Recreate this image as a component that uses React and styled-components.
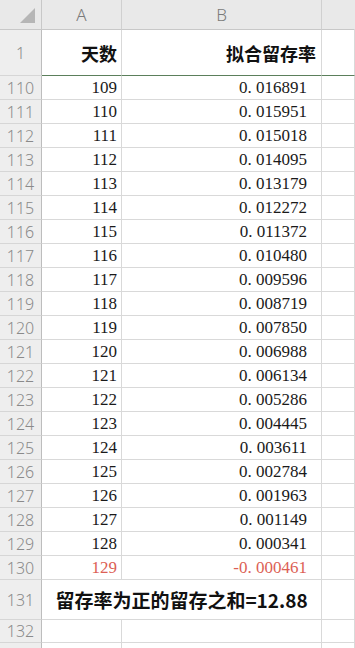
import React from 'react'
import styled, { createGlobalStyle } from 'styled-components'

const GlobalStyle = createGlobalStyle`
  html, body {
    margin: 0;
    padding: 0;
    background: #ffffff;
    overflow: hidden;
  }
`

const Sheet = styled.div`
  display: grid;
  grid-template-columns: 42px 80px 200px 1fr;
  width: 355px;
  height: 648px;
  overflow: hidden;
  background: #ffffff;
`

const Corner = styled.div`
  box-sizing: border-box;
  height: 30px;
  background: #e9e9e9;
  border-right: 1px solid #c8c8c8;
  border-bottom: 1px solid #c8c8c8;
  display: flex;
  align-items: flex-end;
  justify-content: flex-end;
  padding: 0 6px 6px 0;
`

const Triangle = styled.div`
  width: 0;
  height: 0;
  border-left: 15px solid transparent;
  border-bottom: 15px solid #b6b6b6;
`

const ColHead = styled.div`
  box-sizing: border-box;
  height: 30px;
  background: #e9e9e9;
  border-right: 1px solid ${(p) => (p.last ? 'transparent' : '#d0d0d0')};
  border-bottom: 1px solid #c8c8c8;
  display: flex;
  align-items: center;
  justify-content: center;
  font-family: 'Noto Sans', sans-serif;
  font-weight: 300;
  font-size: 17px;
  color: #7a7a7a;
`

const RowHead = styled.div`
  box-sizing: border-box;
  height: ${(p) => p.h}px;
  background: #eeeeee;
  border-right: 1px solid #bdbdbd;
  border-bottom: 1px solid #d6d6d6;
  display: flex;
  align-items: center;
  justify-content: center;
  font-family: 'Noto Sans', sans-serif;
  font-weight: 300;
  font-size: 16px;
  color: #8a8a8a;
`

const Cell = styled.div`
  box-sizing: border-box;
  height: ${(p) => p.h}px;
  border-right: 1px solid #d9d9d9;
  border-bottom: 1px solid ${(p) => (p.frozen ? '#5b7f5b' : '#d9d9d9')};
  display: flex;
  align-items: center;
  justify-content: flex-end;
  padding-right: ${(p) => p.pr || 4}px;
  font-family: 'Liberation Serif', 'DejaVu Serif', serif;
  font-size: 17px;
  color: ${(p) => (p.red ? '#dc5f55' : '#1a1a1a')};
`

const TitleCell = styled(Cell)`
  align-items: flex-end;
  padding-bottom: 9px;
  font-family: 'Noto Sans CJK SC', 'Noto Sans', sans-serif;
  font-weight: 700;
  font-size: 18px;
  color: #111111;
`

const SumCell = styled.div`
  grid-column: span 2;
  box-sizing: border-box;
  height: 40px;
  border-right: 1px solid #d9d9d9;
  border-bottom: 1px solid #d9d9d9;
  display: flex;
  align-items: center;
  justify-content: center;
  font-family: 'Noto Sans CJK SC', 'Noto Sans', sans-serif;
  font-weight: 700;
  font-size: 19px;
  color: #111111;
`

const Dot = styled.span`
  letter-spacing: 0.25em;
`

const rates = [
  '0.016891', '0.015951', '0.015018', '0.014095', '0.013179', '0.012272',
  '0.011372', '0.010480', '0.009596', '0.008719', '0.007850', '0.006988',
  '0.006134', '0.005286', '0.004445', '0.003611', '0.002784', '0.001963',
  '0.001149', '0.000341', '-0.000461',
]

const Rate = ({ value }) => {
  const [a, b] = value.split('.')
  return (
    <span>
      {a}
      <Dot>.</Dot>
      {b}
    </span>
  )
}

const App = () => {
  return (
    <>
      <GlobalStyle />
      <Sheet>
        <Corner>
          <Triangle />
        </Corner>
        <ColHead>A</ColHead>
        <ColHead>B</ColHead>
        <ColHead last />

        <RowHead h={46}>1</RowHead>
        <TitleCell h={46} frozen>天数</TitleCell>
        <TitleCell h={46} frozen pr={5}>拟合留存率</TitleCell>
        <Cell h={46} frozen />

        {rates.map((r, i) => {
          const red = r.startsWith('-')
          return (
            <React.Fragment key={i}>
              <RowHead h={24}>{110 + i}</RowHead>
              <Cell h={24} red={red}>{109 + i}</Cell>
              <Cell h={24} red={red} pr={14}>
                <Rate value={r} />
              </Cell>
              <Cell h={24} />
            </React.Fragment>
          )
        })}

        <RowHead h={40}>131</RowHead>
        <SumCell>留存率为正的留存之和=12.88</SumCell>
        <Cell h={40} />

        <RowHead h={23}>132</RowHead>
        <Cell h={23} />
        <Cell h={23} />
        <Cell h={23} />

        <RowHead h={24} />
        <Cell h={24} />
        <Cell h={24} />
        <Cell h={24} />
      </Sheet>
    </>
  )
}

export default App
